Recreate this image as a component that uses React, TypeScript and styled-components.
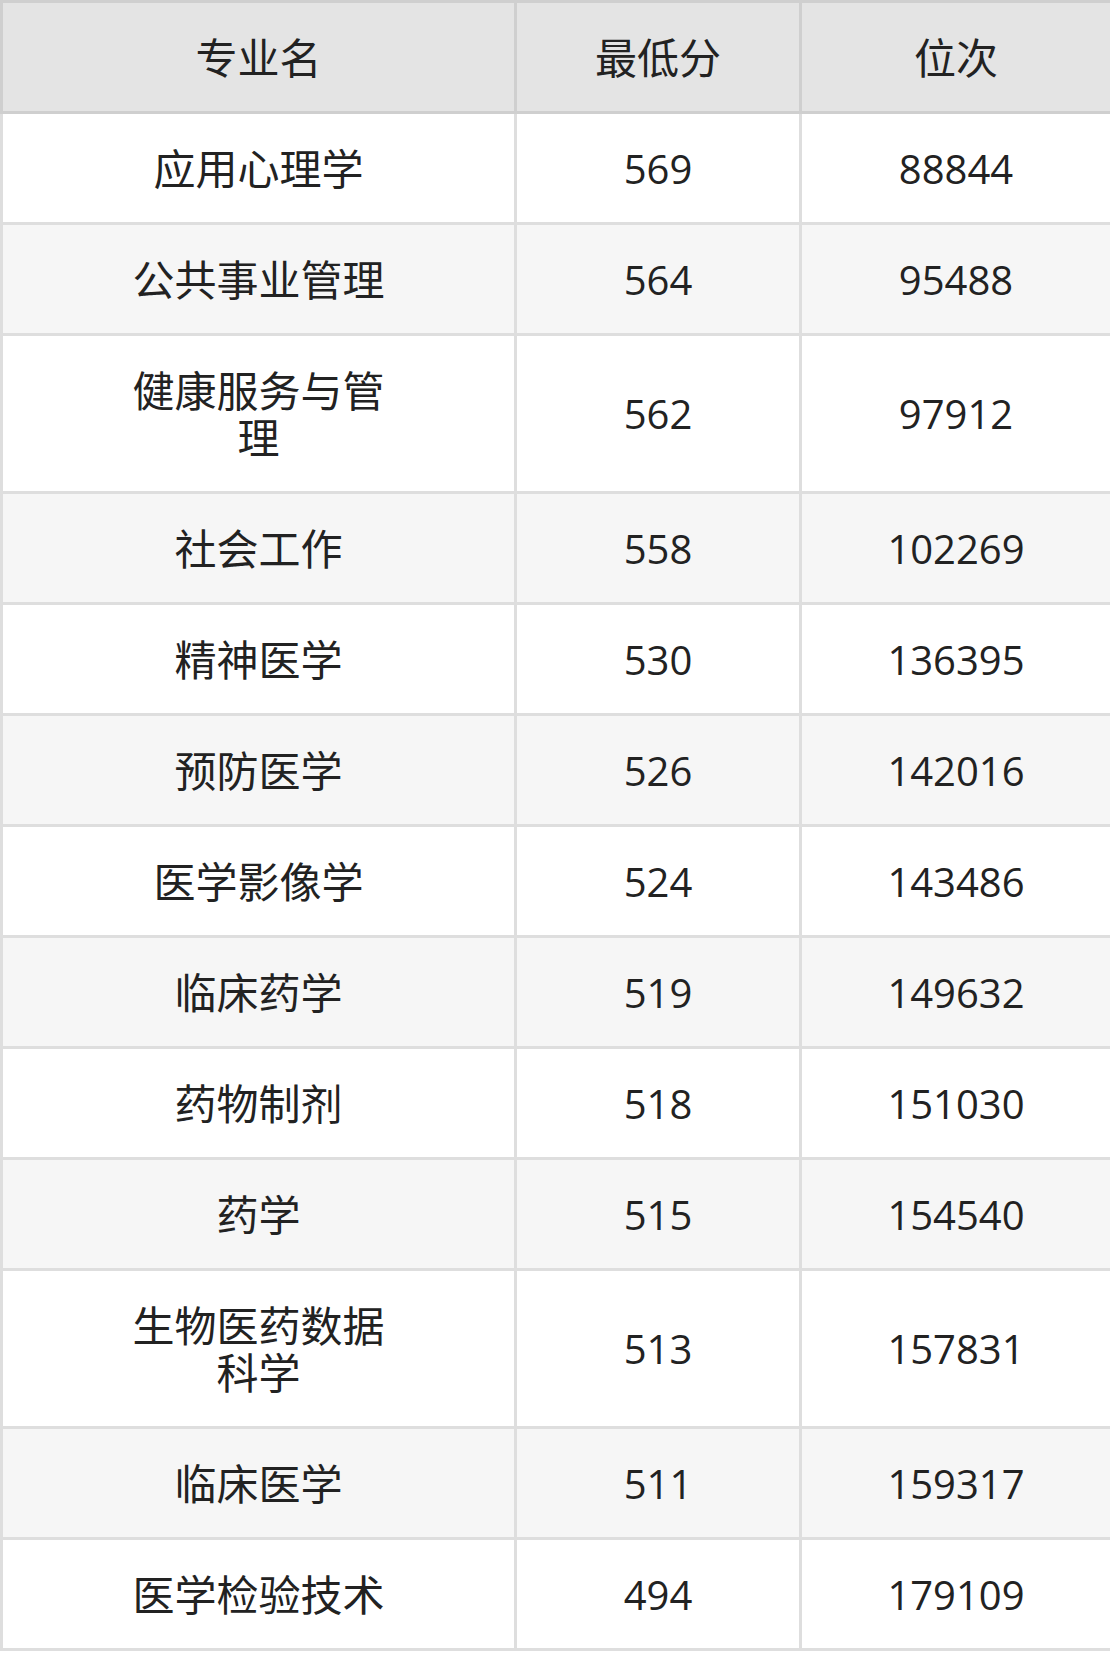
import React from 'react';
import styled, { createGlobalStyle } from 'styled-components';

const GlobalStyle = createGlobalStyle`
  html, body {
    margin: 0;
    padding: 0;
    background: #ffffff;
  }
  body {
    font-family: "Open Sans", "Noto Sans CJK SC", sans-serif;
    color: #222222;
  }
`;

const Table = styled.table`
  width: 1110px;
  border-collapse: collapse;
  table-layout: fixed;
  font-size: 40px;
  line-height: 47px;
`;

const HeadCell = styled.th`
  background-color: #e4e4e4;
  border: 3px solid #cfcfcf;
  font-weight: 400;
  font-size: 42px;
  padding: 30.5px 0;
  text-align: center;
`;

const Row = styled.tr<{ $striped: boolean }>`
  background-color: ${props => (props.$striped ? '#f6f6f6' : '#ffffff')};
`;

const Cell = styled.td<{ $name?: boolean }>`
  border: 3px solid #dedede;
  padding: 30.5px ${props => (props.$name ? '118px' : '0')};
  font-size: ${props => (props.$name ? '42px' : '40px')};
  text-align: center;
  vertical-align: middle;
`;

const rows: [string, number, number][] = [
  ['应用心理学', 569, 88844],
  ['公共事业管理', 564, 95488],
  ['健康服务与管理', 562, 97912],
  ['社会工作', 558, 102269],
  ['精神医学', 530, 136395],
  ['预防医学', 526, 142016],
  ['医学影像学', 524, 143486],
  ['临床药学', 519, 149632],
  ['药物制剂', 518, 151030],
  ['药学', 515, 154540],
  ['生物医药数据科学', 513, 157831],
  ['临床医学', 511, 159317],
  ['医学检验技术', 494, 179109],
];

export default function App(): React.ReactElement {
  return (
    <>
      <GlobalStyle />
      <Table>
        <colgroup>
          <col style={{ width: 514 }} />
          <col style={{ width: 285 }} />
          <col style={{ width: 311 }} />
        </colgroup>
        <thead>
          <tr>
            <HeadCell>专业名</HeadCell>
            <HeadCell>最低分</HeadCell>
            <HeadCell>位次</HeadCell>
          </tr>
        </thead>
        <tbody>
          {rows.map(([name, score, rank], i) => (
            <Row key={name} $striped={i % 2 === 1}>
              <Cell $name>{name}</Cell>
              <Cell>{score}</Cell>
              <Cell>{rank}</Cell>
            </Row>
          ))}
        </tbody>
      </Table>
    </>
  );
}
